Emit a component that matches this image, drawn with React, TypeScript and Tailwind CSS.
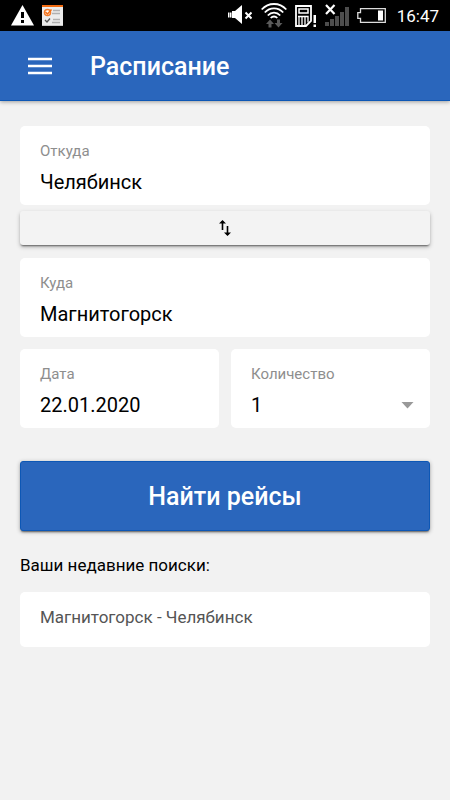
import { useState } from "react";

function StatusBar() {
  return (
    <div className="flex h-[31px] items-center justify-between bg-black pl-[10px] pr-[11px] text-white">
      <div className="flex items-center gap-[7px]">
        <svg width="25" height="31" viewBox="0 0 25 31" aria-hidden="true">
          <path d="M12.5 5 24 25.500H1Z" fill="#fff" />
          <path d="M11 12h3v6h-3zM11 20h3v3h-3z" fill="#000" />
        </svg>
        <svg width="21" height="31" viewBox="0 0 21 31" aria-hidden="true">
          <rect y="5" width="21" height="21" fill="#ececec" />
          <rect y="5" width="21" height="2" fill="#f26c12" />
          <rect y="25" width="21" height="1" fill="#c4c4c4" />
          <circle cx="5.5" cy="12.5" r="3" fill="#fff" stroke="#f47a28" strokeWidth="1.5" />
          <path d="m3.5 12 2 2 4-4.500" fill="none" stroke="#f26c12" strokeWidth="1.500" />
          <path d="m3 20 2 2 3-3.500" fill="none" stroke="#555" strokeWidth="1.300" />
          <path d="M11 10.500h7M10 13.500h8M11 19.500h7M10 22.500h8" stroke="#b0b0b0" strokeWidth="1.300" />
        </svg>
      </div>
      <div className="flex items-center">
        <svg width="24" height="31" viewBox="0 0 24 31" aria-hidden="true">
          <path d="M0 12.500h1v5H0zM1.500 12.500h2v5h-2zM4 11h3l7-6v19l-7-6H4z" fill="#fff" />
          <path d="m17.500 12.500 6 6m0-6-6 6" stroke="#fff" strokeWidth="2" />
        </svg>
        <svg className="ml-[9px]" width="26" height="31" viewBox="0 0 26 31" aria-hidden="true">
          <g fill="none" stroke="#fff" strokeWidth="1.800">
            <path d="M.7 9.500C7.500 2.200 18.500 2.200 25.300 9.500" />
            <path d="M3.800 12.500c5-5.500 13.400-5.500 18.400 0" />
            <path d="M6.800 15.500c3.500-3.800 8.900-3.800 12.400 0" />
            <path d="M9.700 18c1.900-2 4.700-2 6.600 0" />
          </g>
          <path d="M9 19.500 13 24h-2.500v3.500h-3V24H5zM17.500 27.500l4-4.500H19v-3.500h-3V23h-2.500z" fill="#5a5a5a" />
        </svg>
        <svg className="ml-[8px]" width="22" height="31" viewBox="0 0 22 31" aria-hidden="true">
          <path d="M1 6h15v15l-5 5H1z" fill="none" stroke="#fff" strokeWidth="1.800" />
          <path d="M4 9h9v4H4z" fill="none" stroke="#fff" strokeWidth="1.500" />
          <path d="M4 16.500v9M7 16.500v9M10 16.500v9M3 16.500h10v6" fill="none" stroke="#fff" strokeWidth="1.300" />
          <path d="M18.500 15h2.500v8h-2.500zM18.500 24.500h2.500V27h-2.500z" fill="#fff" />
        </svg>
        <svg className="ml-[8px]" width="25" height="31" viewBox="0 0 25 31" aria-hidden="true">
          <path d="M0 22h4v4H0zM5 19h4v7H5zM10 16h4v10h-4zM15 12h4v14h-4zM20 7h4v19h-4z" fill="#4d4d4d" />
          <path d="m1 5 8.500 9M9.500 5 1 14" stroke="#fff" strokeWidth="2.200" />
        </svg>
        <svg className="ml-[7px]" width="29" height="31" viewBox="0 0 29 31" aria-hidden="true">
          <path d="M3.500 8.700h24.800v13.600H3.500v-4H.8v-5.600h2.700z" fill="none" stroke="#ddd" strokeWidth="1.300" />
          <path d="M21 10.500h5v10h-5z" fill="#fff" />
        </svg>
        <span className="ml-[11px] pt-px text-[17px] leading-[30px]">16:47</span>
      </div>
    </div>
  );
}

const field = "flex flex-col rounded-[5px] bg-white px-5 pt-[15px] pb-[7px]";
const caption = "text-[15px] leading-5 text-[#8e8e8e]";
const control = "h-[31px] w-full min-w-0 appearance-none bg-transparent text-[20px] leading-[31px] text-black outline-none";

export default function App() {
  const [from, setFrom] = useState("Челябинск");
  const [to, setTo] = useState("Магнитогорск");
  const [date, setDate] = useState("22.01.2020");
  const [count, setCount] = useState("1");

  const swap = () => {
    setFrom(to);
    setTo(from);
  };

  return (
    <div className="flex min-h-screen flex-col bg-[#f2f2f2] font-[Roboto,sans-serif]">
      <StatusBar />
      <header className="flex h-[70px] items-center border-b border-[#0d57b5] bg-[#2a66bc] px-7 text-white shadow-[0_1px_4px_rgba(0,0,0,0.35)]">
        <button type="button" aria-label="Меню" className="flex h-10 w-6 items-center">
          <svg width="24" height="18" viewBox="0 0 24 18" aria-hidden="true">
            <path d="M0 2h24M0 9h24M0 16h24" stroke="#fff" strokeWidth="2.600" />
          </svg>
        </button>
        <h1 className="ml-[38px] pt-[2px] text-[25px] leading-8 font-medium">Расписание</h1>
      </header>

      <main className="flex flex-col px-5 pt-[25px]">
        <div className={field}>
          <label htmlFor="from" className={caption}>Откуда</label>
          <input id="from" className={`${control} mt-1.5`} value={from} onChange={(e) => setFrom(e.target.value)} />
        </div>
        <button
          type="button"
          aria-label="Поменять местами"
          onClick={swap}
          className="mt-[6px] mb-[13px] flex h-[34px] items-center justify-center rounded-[3px] bg-[#f3f3f3] shadow-[0_2px_2px_-1px_rgba(0,0,0,0.5),0_2px_4px_rgba(0,0,0,0.25)]"
        >
          <svg width="12" height="18" viewBox="0 0 12 18" aria-hidden="true">
            <path d="M3.500 11V2M8.500 7v9" stroke="#000" strokeWidth="1.600" />
            <path d="M0 4.500 3.500 1 7 4.500zM5 13.500 8.500 17 12 13.500z" fill="#000" />
          </svg>
        </button>
        <div className={field}>
          <label htmlFor="to" className={caption}>Куда</label>
          <input id="to" className={`${control} mt-1.5`} value={to} onChange={(e) => setTo(e.target.value)} />
        </div>
        <div className="mt-3 grid grid-cols-2 gap-3">
          <div className={field}>
            <label htmlFor="date" className={caption}>Дата</label>
            <input id="date" className={`${control} mt-1.5`} value={date} onChange={(e) => setDate(e.target.value)} />
          </div>
          <div className={field}>
            <label htmlFor="count" className={caption}>Количество</label>
            <div className="mt-1.5 flex items-center">
              <select id="count" className={control} value={count} onChange={(e) => setCount(e.target.value)}>
                <option>1</option>
                <option>2</option>
                <option>3</option>
                <option>4</option>
              </select>
              <svg className="-mr-1 shrink-0" width="13" height="7" viewBox="0 0 13 7" aria-hidden="true">
                <path d="M.5 0h12l-6 6.500z" fill="#999" />
              </svg>
            </div>
          </div>
        </div>
        <button
          type="button"
          className="mt-[33px] h-[70px] rounded-[3px] border border-[#0d57b5] bg-[#2a66bc] pt-[2px] text-[25px] font-medium text-white shadow-[0_2px_2px_-1px_rgba(0,0,0,0.5),0_1px_4px_rgba(0,0,0,0.3)]"
        >
          Найти рейсы
        </button>
        <h2 className="mt-[22px] text-[17px] leading-6 text-black">Ваши недавние поиски:</h2>
        <button type="button" className="mt-[15px] h-[55px] rounded-[5px] bg-white px-5 pb-1 text-left text-[17px] text-[#555]">
          Магнитогорск - Челябинск
        </button>
      </main>
    </div>
  );
}
